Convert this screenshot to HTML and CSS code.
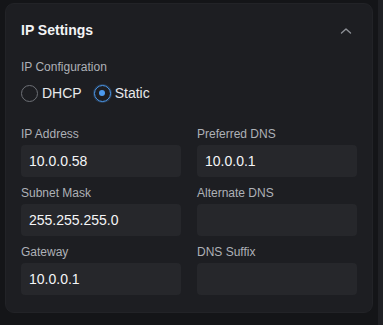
FILE: index.html
```html
<!DOCTYPE html>
<html>
<head>
<meta charset="utf-8">
<link rel="stylesheet" href="styles.css">
</head>
<body>
<div class="page">
  <section class="card">
    <header class="card-head">
      <h2 class="title">IP Settings</h2>
      <svg class="chev" width="12" height="8" viewBox="0 0 12 8"><path d="M1.5 6 L6 2 L10.5 6" fill="none" stroke="#8e9197" stroke-width="1.4" stroke-linecap="round" stroke-linejoin="round"/></svg>
    </header>
    <div class="label cfg">IP Configuration</div>
    <div class="radios">
      <label class="radio"><span class="dot"></span>DHCP</label>
      <label class="radio on"><span class="dot"></span>Static</label>
    </div>
    <div class="grid">
      <div class="field"><div class="label">IP Address</div><div class="input">10.0.0.58</div></div>
      <div class="field"><div class="label">Preferred DNS</div><div class="input">10.0.0.1</div></div>
      <div class="field"><div class="label">Subnet Mask</div><div class="input">255.255.255.0</div></div>
      <div class="field"><div class="label">Alternate DNS</div><div class="input"></div></div>
      <div class="field"><div class="label">Gateway</div><div class="input">10.0.0.1</div></div>
      <div class="field"><div class="label">DNS Suffix</div><div class="input"></div></div>
    </div>
  </section>
  <div class="strip"></div>
</div>
</body>
</html>
```
FILE: styles.css
```css
* { box-sizing: border-box; }
html, body { margin: 0; padding: 0; }
body {
  background: #141518;
  font-family: "Liberation Sans", Arial, sans-serif;
  width: 383px;
  height: 325px;
  overflow: hidden;
}
.page {
  display: flex;
  padding: 3px 0 0 5px;
  height: 325px;
}
.card {
  width: 368px;
  height: 310px;
  background: #1d1e22;
  border: 1px solid #222327;
  border-radius: 9px;
  padding: 15px 15px;
}
.strip {
  margin-left: 5px;
  margin-top: -3px;
  width: 5px;
  height: 325px;
  background: #1f2024;
}
.card-head {
  display: flex;
  align-items: center;
  justify-content: space-between;
  height: 22px;
}
.title {
  margin: 0;
  font-size: 14px;
  font-weight: bold;
  color: #f2f3f5;
}
.chev { margin-right: 5px; margin-top: 1px; }
.label {
  font-size: 12px;
  line-height: 16px;
  color: #aeb1b7;
}
.cfg { margin-top: 18px; }
.radios {
  display: flex;
  gap: 12px;
  margin-top: 8px;
  height: 20px;
  align-items: center;
}
.radio {
  display: flex;
  align-items: center;
  gap: 4px;
  font-size: 14px;
  color: #e8e9eb;
}
.dot {
  width: 17px;
  height: 17px;
  border-radius: 50%;
  border: 1.5px solid #6d7076;
  display: inline-block;
  position: relative;
}
.radio.on .dot {
  border-color: #4c9bf0;
  box-shadow: 0 0 0 1px rgba(76,155,240,0.25);
}
.radio.on .dot::after {
  content: "";
  position: absolute;
  left: 50%;
  top: 50%;
  width: 6px;
  height: 6px;
  margin: -3px 0 0 -3px;
  border-radius: 50%;
  background: #4c9bf0;
}
.grid {
  margin-top: 23px;
  display: grid;
  grid-template-columns: 160px 160px;
  column-gap: 16px;
  row-gap: 8px;
}
.field .label { margin-bottom: 3px; }
.input {
  height: 32px;
  background: #26272b;
  border-radius: 4px;
  padding: 0 8px;
  font-size: 14px;
  line-height: 32px;
  color: #f4f5f7;
}
```
